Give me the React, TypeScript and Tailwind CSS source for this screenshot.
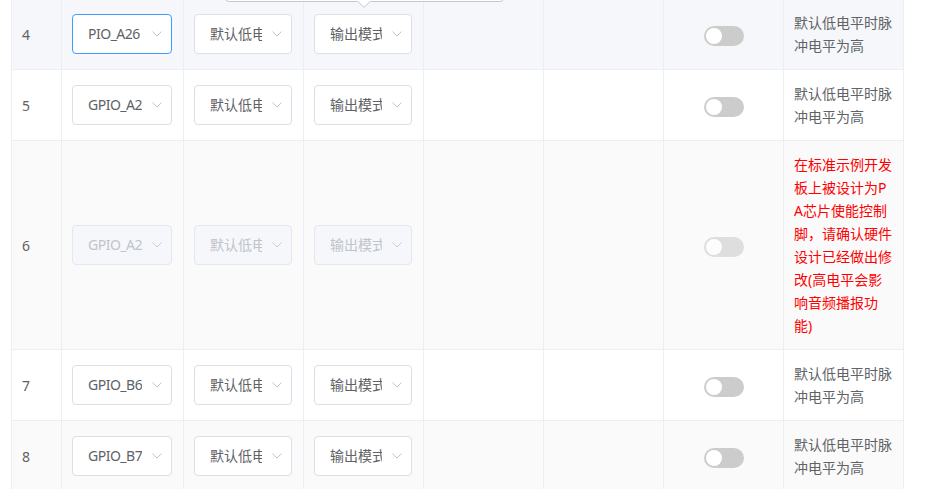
import React from "react";

const FONT = { fontFamily: '"Noto Sans", "Noto Sans CJK SC", sans-serif' };

function Chevron({ disabled }: { disabled?: boolean }) {
  return (
    <svg width="10" height="6" viewBox="0 0 10 6" className="block">
      <polyline
        points="0.5,0.5 5,5 9.5,0.5"
        fill="none"
        stroke={disabled ? "#c8ccd4" : "#c0c4cc"}
        strokeWidth="1"
      />
    </svg>
  );
}

function Select({
  text,
  wide,
  focused,
  disabled,
}: {
  text: string;
  wide?: boolean;
  focused?: boolean;
  disabled?: boolean;
}) {
  const border = focused
    ? "border-[#409eff]"
    : disabled
    ? "border-[#e4e7ed]"
    : "border-[#dcdfe6]";
  const bg = disabled ? "bg-[#f5f7fa]" : "bg-white";
  const color = disabled ? "text-[#c0c4cc]" : "text-[#606266]";
  return (
    <div
      className={`${wide ? "w-[100px]" : "w-[98px]"} h-10 rounded border ${border} ${bg} flex items-center pl-[15px]`}
    >
      <div
        className={`flex-1 overflow-hidden whitespace-nowrap text-[14px] leading-[38px] ${wide ? "tracking-[-0.5px]" : ""} ${color}`}
      >
        {text}
      </div>
      <div className="w-[29px] shrink-0 flex justify-end pr-[9px]">
        <Chevron disabled={disabled} />
      </div>
    </div>
  );
}

function Toggle({ disabled }: { disabled?: boolean }) {
  return (
    <div
      className={`w-10 h-5 rounded-full bg-[#cccccc] relative translate-y-[2px] ${disabled ? "opacity-60" : ""}`}
    >
      <div className="absolute left-[2px] top-[2px] w-4 h-4 rounded-full bg-white" />
    </div>
  );
}

type Row = {
  idx: string;
  pin: string;
  bg: string;
  focused?: boolean;
  disabled?: boolean;
  red?: boolean;
};

const rows: Row[] = [
  { idx: "4", pin: "PIO_A26", bg: "bg-[#f5f7fa]", focused: true },
  { idx: "5", pin: "GPIO_A2", bg: "bg-white" },
  { idx: "6", pin: "GPIO_A2", bg: "bg-[#fafafa]", disabled: true, red: true },
  { idx: "7", pin: "GPIO_B6", bg: "bg-white" },
  { idx: "8", pin: "GPIO_B7", bg: "bg-[#fafafa]" },
];

const cellBase = "border-r border-[#ebeef5] flex items-center py-3 px-[10px]";

export default function App() {
  return (
    <div
      className="relative w-[926px] h-[489px] overflow-hidden bg-white text-[#606266]"
      style={FONT}
    >
      <div className="ml-[11px] -mt-px w-[893px] border-l border-[#ebeef5]">
        {rows.map((r) => (
          <div key={r.idx} className={`flex border-b border-[#ebeef5] ${r.bg}`}>
            <div className={`${cellBase} w-[50px] text-[14px]`}>{r.idx}</div>
            <div className={`${cellBase} w-[122px]`}>
              <Select text={r.pin} wide focused={r.focused} disabled={r.disabled} />
            </div>
            <div className={`${cellBase} w-[120px]`}>
              <Select text="默认低电平" disabled={r.disabled} />
            </div>
            <div className={`${cellBase} w-[120px]`}>
              <Select text="输出模式" disabled={r.disabled} />
            </div>
            <div className={`${cellBase} w-[120px]`} />
            <div className={`${cellBase} w-[120px]`} />
            <div className={`${cellBase} w-[120px] justify-center`}>
              <Toggle disabled={r.disabled} />
            </div>
            <div className={`${cellBase} w-[120px]`}>
              <div
                className={`text-[14px] leading-[23px] break-all ${r.red ? "text-[#ff0000]" : "text-[#606266]"}`}
              >
                {r.red
                  ? "在标准示例开发板上被设计为PA芯片使能控制脚，请确认硬件设计已经做出修改(高电平会影响音频播报功能)"
                  : "默认低电平时脉冲电平为高"}
              </div>
            </div>
          </div>
        ))}
      </div>

      {/* popover remnant at top */}
      <div className="absolute left-[225px] top-[-40px] w-[279px] h-[42px] bg-white border border-[#c4c6cc] rounded" />
      <svg
        width="14"
        height="8"
        viewBox="0 0 14 8"
        className="absolute left-[357px] top-px"
      >
        <polygon points="0,0 7,6.5 14,0" fill="#ffffff" />
        <polyline points="0.5,0 7,6.3 13.5,0" fill="none" stroke="#c4c6cc" strokeWidth="1" />
      </svg>
    </div>
  );
}
